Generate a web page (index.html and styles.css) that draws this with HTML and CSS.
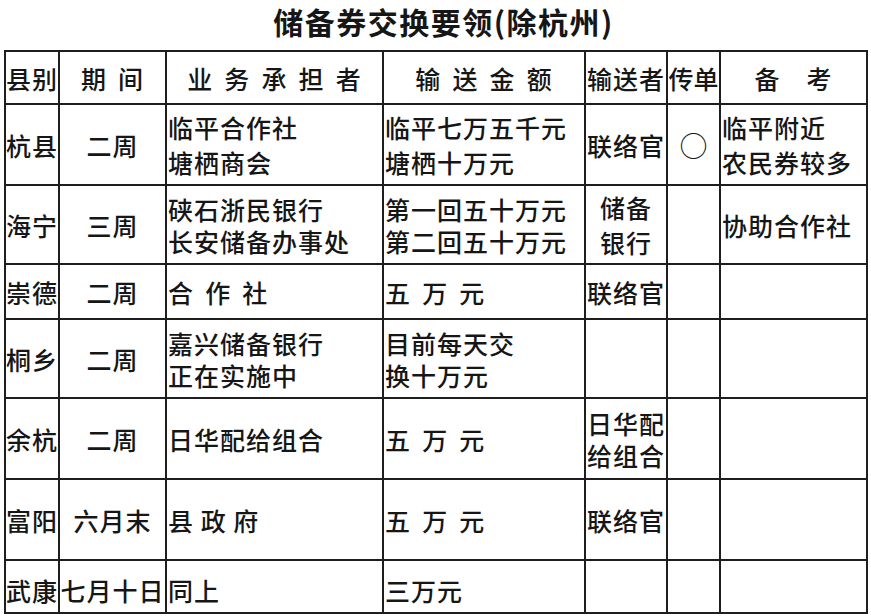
FILE: index.html
```html
<!DOCTYPE html>
<html lang="zh-CN">
<head>
<meta charset="utf-8">
<title>储备券交换要领(除杭州)</title>
<link rel="stylesheet" href="styles.css">
</head>
<body>
<div class="page">
  <h1 class="title">储备券交换要领(除杭州)</h1>
  <div class="sheet">
    <div class="cell c">县别</div>
    <div class="cell c wide">期 间</div>
    <div class="cell c wide">业 务 承 担 者</div>
    <div class="cell c wide">输 送 金 额</div>
    <div class="cell c">输送者</div>
    <div class="cell c tight">传单</div>
    <div class="cell c">备　考</div>

    <div class="cell c">杭县</div>
    <div class="cell c">二周</div>
    <div class="cell l tall">临平合作社<br>塘栖商会</div>
    <div class="cell l tall">临平七万五千元<br>塘栖十万元</div>
    <div class="cell c">联络官</div>
    <div class="cell c"><span class="ring">○</span></div>
    <div class="cell l tall">临平附近<br>农民券较多</div>

    <div class="cell c">海宁</div>
    <div class="cell c">三周</div>
    <div class="cell l">硖石浙民银行<br>长安储备办事处</div>
    <div class="cell l">第一回五十万元<br>第二回五十万元</div>
    <div class="cell c tall">储备<br>银行</div>
    <div class="cell c"></div>
    <div class="cell l">协助合作社</div>

    <div class="cell c">崇德</div>
    <div class="cell c">二周</div>
    <div class="cell l wide">合 作 社</div>
    <div class="cell l wide">五 万 元</div>
    <div class="cell c">联络官</div>
    <div class="cell c"></div>
    <div class="cell l"></div>

    <div class="cell c">桐乡</div>
    <div class="cell c">二周</div>
    <div class="cell l">嘉兴储备银行<br>正在实施中</div>
    <div class="cell l">目前每天交<br>换十万元</div>
    <div class="cell c"></div>
    <div class="cell c"></div>
    <div class="cell l"></div>

    <div class="cell c">余杭</div>
    <div class="cell c">二周</div>
    <div class="cell l">日华配给组合</div>
    <div class="cell l wide">五 万 元</div>
    <div class="cell c">日华配<br>给组合</div>
    <div class="cell c"></div>
    <div class="cell l"></div>

    <div class="cell c">富阳</div>
    <div class="cell c">六月末</div>
    <div class="cell l">县 政 府</div>
    <div class="cell l wide">五 万 元</div>
    <div class="cell c">联络官</div>
    <div class="cell c"></div>
    <div class="cell l"></div>

    <div class="cell c low">武康</div>
    <div class="cell c low">七月十日</div>
    <div class="cell l low">同上</div>
    <div class="cell l low">三万元</div>
    <div class="cell c low"></div>
    <div class="cell c low"></div>
    <div class="cell l low"></div>
  </div>
</div>
</body>
</html>
```

FILE: styles.css
```css
html, body {
  margin: 0;
  padding: 0;
  background: #ffffff;
}

body {
  font-family: "Noto Sans CJK SC", "Noto Sans", sans-serif;
  color: #161616;
}

.page {
  width: 871px;
  height: 616px;
  overflow: hidden;
}

.title {
  margin: 0;
  height: 50px;
  font-size: 30px;
  line-height: 42px;
  font-weight: 700;
  letter-spacing: 1.5px;
  text-align: center;
  padding-left: 16px;
  box-sizing: border-box;
  white-space: nowrap;
}

.sheet {
  display: grid;
  grid-template-columns: 54px 107px 217px 202px 82px 53px 147px;
  grid-template-rows: 53px 81px 79px 55px 79px 81px 81px 53px;
  width: max-content;
  margin-left: 4px;
  border-top: 2px solid #1e1e1e;
  border-left: 2px solid #1e1e1e;
}

.cell {
  box-sizing: border-box;
  border-right: 2px solid #1e1e1e;
  border-bottom: 2px solid #1e1e1e;
  display: flex;
  align-items: center;
  font-size: 25px;
  font-weight: 500;
  line-height: 32px;
  letter-spacing: 1px;
  white-space: nowrap;
  overflow: visible;
}

.c {
  justify-content: center;
  text-align: center;
}

.l {
  justify-content: flex-start;
  text-align: left;
  padding-left: 1px;
}

.wide {
  word-spacing: 4.5px;
}

.tight {
  letter-spacing: 0;
}

.tall {
  line-height: 35px;
}

.low {
  padding-top: 6px;
}

.ring {
  font-size: 28px;
  font-weight: 400;
  letter-spacing: 0;
  line-height: 28px;
}
```
